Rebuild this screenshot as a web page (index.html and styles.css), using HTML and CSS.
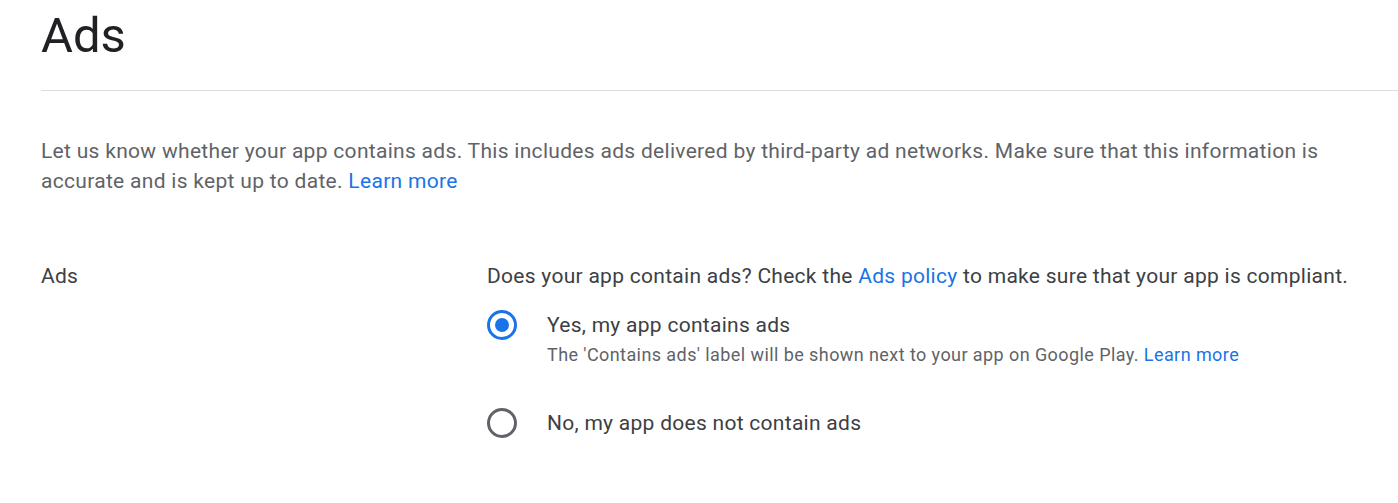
FILE: index.html
```html
<!DOCTYPE html>
<html lang="en">
<head>
<meta charset="utf-8">
<title>Ads</title>
<link rel="stylesheet" href="styles.css">
</head>
<body>
<main class="page">
  <header class="page-header">
    <h1 class="page-title">Ads</h1>
  </header>
  <p class="intro">Let us know whether your app contains ads. This includes ads delivered by third-party ad networks. Make sure that this information is accurate and is kept up to date. <a class="link" href="#">Learn more</a></p>
  <section class="field-row">
    <div class="field-label">Ads</div>
    <div class="field-body">
      <div class="question">Does your app contain ads? Check the <a class="link" href="#">Ads policy</a> to make sure that your app is compliant.</div>
      <div class="options">
        <label class="option">
          <span class="radio radio-checked"><span class="radio-dot"></span></span>
          <span class="option-text">
            <span class="option-title">Yes, my app contains ads</span>
            <span class="option-sub">The 'Contains ads' label will be shown next to your app on Google Play. <a class="link" href="#">Learn more</a></span>
          </span>
        </label>
        <label class="option">
          <span class="radio"></span>
          <span class="option-text">
            <span class="option-title">No, my app does not contain ads</span>
          </span>
        </label>
      </div>
    </div>
  </section>
</main>
</body>
</html>
```

FILE: styles.css
```css
html, body {
  margin: 0;
  padding: 0;
  background: #ffffff;
}

body {
  font-family: Roboto, "Liberation Sans", Arial, sans-serif;
  color: #3c4043;
}

.page {
  padding-left: 41px;
}

.page-header {
  padding-top: 8px;
  padding-bottom: 26px;
  border-bottom: 1px solid #dadce0;
}

.page-title {
  margin: 0;
  font-size: 49px;
  line-height: 56px;
  font-weight: 400;
  color: #202124;
}

.intro {
  margin: 45px 0 0 0;
  font-size: 21px;
  line-height: 30px;
  letter-spacing: 0.3px;
  color: #5f6368;
  padding-right: 16px;
}

.link {
  color: #1a73e8;
  text-decoration: none;
}

.field-row {
  display: grid;
  grid-template-columns: 446px 1fr;
  margin-top: 65px;
}

.field-label {
  font-size: 21px;
  line-height: 30px;
  letter-spacing: 0.28px;
  color: #3c4043;
}

.question {
  font-size: 21px;
  line-height: 30px;
  letter-spacing: 0.28px;
  color: #3c4043;
}

.options {
  display: flex;
  flex-direction: column;
  gap: 41px;
  margin-top: 19px;
}

.option {
  display: flex;
  align-items: flex-start;
  gap: 30px;
}

.radio {
  box-sizing: border-box;
  width: 30px;
  height: 30px;
  border: 3px solid #5f6368;
  border-radius: 50%;
  display: flex;
  align-items: center;
  justify-content: center;
  flex: none;
}

.radio-checked {
  border-color: #1a73e8;
}

.radio-dot {
  width: 14px;
  height: 14px;
  border-radius: 50%;
  background: #1a73e8;
}

.option-text {
  display: flex;
  flex-direction: column;
  gap: 3px;
}

.option-title {
  font-size: 21px;
  line-height: 30px;
  letter-spacing: 0.28px;
  color: #3c4043;
}

.option-sub {
  font-size: 18px;
  line-height: 24px;
  letter-spacing: 0.42px;
  color: #5f6368;
}
```
